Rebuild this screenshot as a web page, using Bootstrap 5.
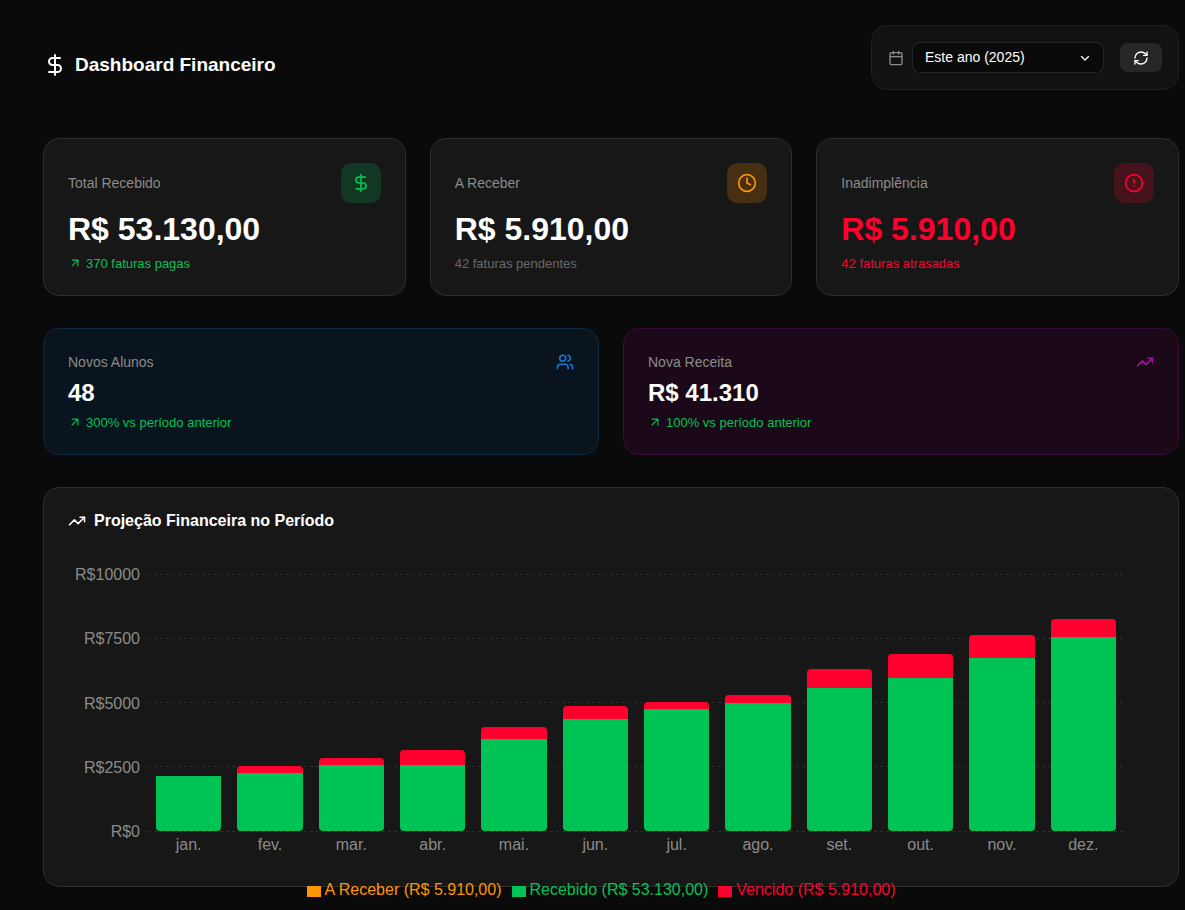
<!DOCTYPE html>
<html lang="pt-BR" data-bs-theme="dark">
<head>
<meta charset="utf-8">
<meta name="viewport" content="width=device-width, initial-scale=1">
<title>Dashboard Financeiro</title>
<link href="https://cdn.jsdelivr.net/npm/bootstrap@5.3.0/dist/css/bootstrap.min.css" rel="stylesheet">
<style>
  :root { --ok: #00c355; --warn: #ff9500; --late: #ff002e; --muted: #8b8b8b; }
  body { background: #0a0a0a; color: #fff; font-family: "Liberation Sans", Arial, sans-serif; }
  svg { flex: none; fill: none; stroke: currentColor; stroke-width: 2; stroke-linecap: round; stroke-linejoin: round; }
  .page { padding: 25px 6px 16px 43px; }
  .page-head { margin-bottom: 48px; }
  .page-title { font-size: 19px; line-height: 24px; font-weight: 700; padding-top: 14px; }
  .text-ok { color: var(--ok); }
  .text-warn { color: var(--warn); }
  .text-late { color: var(--late); }
  .text-dim { color: #696969; }

  .filter { background: #121212; border: 1px solid #1f1f1f; border-radius: 16px; padding: 16px; }
  .filter label { color: var(--muted); line-height: 16px; display: flex; }
  .filter .form-select {
    width: 192px; height: 31px; padding: 0 32px 0 12px; font-size: 14px; color: #fff;
    background-color: #0a0a0a; border-color: #262626; border-radius: 8px;
    background-position: right 12px center; background-size: 12px 12px;
    --bs-form-select-bg-img: url("data:image/svg+xml,%3csvg xmlns='http://www.w3.org/2000/svg' viewBox='0 0 24 24' fill='none' stroke='white' stroke-width='2.6' stroke-linecap='round' stroke-linejoin='round'%3e%3cpath d='m5 9 7 7 7-7'/%3e%3c/svg%3e");
    background-image: var(--bs-form-select-bg-img);
  }
  .refresh { width: 42px; height: 29px; padding: 0; background: #272727; border: 0; border-radius: 8px; color: #fff; }

  .panel { background: #171717; border: 1px solid #2e2e2e; border-radius: 16px; padding: 24px; }
  .panel-blue { background: #09141f; border-color: #0b2a45; }
  .panel-pink { background: #1b0819; border-color: #3a0d38; }
  .block-gap { margin-bottom: 32px; }
  .stat-name { font-size: 14px; line-height: 18px; color: var(--muted); }
  .stat-value { font-size: 32px; line-height: 37px; font-weight: 700; margin: 8px 0; }
  .stat-value-md { font-size: 24px; line-height: 28px; }
  .stat-note { font-size: 13px; line-height: 15px; }
  .stat-icon { width: 40px; height: 40px; border-radius: 10px; }
  .icon-ok { background: #123824; color: var(--ok); }
  .icon-warn { background: #462f13; color: var(--warn); }
  .icon-late { background: #46121c; color: var(--late); }

  .chart-title { font-size: 16px; line-height: 18px; font-weight: 700; margin-bottom: 32px; }
  .chart { height: 300px; padding-top: 12px; color: var(--muted); font-size: 16px; line-height: 24px; }
  .plot { height: 257px; }
  .ticks { inset: -13px 30px -13px 0; }
  .tick-label { width: 72px; padding-top: 2px; text-align: right; }
  .tick-line { height: 1px; background: repeating-linear-gradient(90deg, #2e2e2e 0 3px, transparent 3px 6px); }
  .bars, .months { margin-left: 80px; margin-right: 30px; }
  .bars > div, .months > div { flex: 1 1 0; min-width: 0; }
  .bars > div { padding: 0 8px; }
  .part-late { background: var(--late); border-radius: 4px 4px 0 0; }
  .part-ok { background: var(--ok); border-radius: 0 0 4px 4px; }
  .months { padding-top: 2px; }
  .legend-row { margin: 21px 30px 0 20px; }
  .legend-row li { margin-right: 10px; }
  .swatch { width: 14px; height: 11px; margin: 2px 4px 0 0; background: currentColor; }
</style>
</head>
<body>
<svg class="d-none" aria-hidden="true">
  <symbol id="i-dollar" viewBox="0 0 24 24"><path d="M12 2v20M17 5H9.5a3.5 3.5 0 0 0 0 7h5a3.5 3.5 0 0 1 0 7H6"/></symbol>
  <symbol id="i-up-right" viewBox="0 0 24 24"><path d="M7 7h10v10M7 17 17 7"/></symbol>
  <symbol id="i-trend" viewBox="0 0 24 24"><path d="M16 7h6v6"/><path d="m22 7-8.500 8.500-5-5L2 17"/></symbol>
</svg>
<main class="page">
  <header class="page-head d-flex justify-content-between align-items-center">
    <h1 class="page-title d-flex align-items-center gap-2 mb-0">
      <svg width="24" height="24"><use href="#i-dollar"/></svg>Dashboard Financeiro
    </h1>
    <form class="filter d-flex align-items-center gap-3">
      <div class="d-flex align-items-center gap-2">
        <label for="period" aria-label="Período">
          <svg width="16" height="16" viewBox="0 0 24 24"><path d="M8 2v4M16 2v4M3 10h18"/><rect x="3" y="4" width="18" height="18" rx="2"/></svg>
        </label>
        <select id="period" class="form-select"><option>Este ano (2025)</option></select>
      </div>
      <button type="button" class="btn refresh d-flex align-items-center justify-content-center" aria-label="Atualizar">
        <svg width="16" height="16" viewBox="0 0 24 24"><path d="M3 12a9 9 0 0 1 9-9 9.750 9.750 0 0 1 6.740 2.740L21 8"/><path d="M21 3v5h-5"/><path d="M21 12a9 9 0 0 1-9 9 9.750 9.750 0 0 1-6.740-2.740L3 16"/><path d="M8 16H3v5"/></svg>
      </button>
    </form>
  </header>

  <section class="row row-cols-3 gx-4 block-gap">
    <div class="col"><div class="panel">
      <div class="d-flex justify-content-between align-items-center">
        <span class="stat-name">Total Recebido</span>
        <span class="stat-icon icon-ok d-flex align-items-center justify-content-center"><svg width="20" height="20"><use href="#i-dollar"/></svg></span>
      </div>
      <div class="stat-value">R$ 53.130,00</div>
      <div class="stat-note text-ok d-flex gap-1"><svg width="14" height="14"><use href="#i-up-right"/></svg>370 faturas pagas</div>
    </div></div>
    <div class="col"><div class="panel">
      <div class="d-flex justify-content-between align-items-center">
        <span class="stat-name">A Receber</span>
        <span class="stat-icon icon-warn d-flex align-items-center justify-content-center"><svg width="20" height="20" viewBox="0 0 24 24"><circle cx="12" cy="12" r="10"/><path d="M12 6v6l4 2"/></svg></span>
      </div>
      <div class="stat-value">R$ 5.910,00</div>
      <div class="stat-note text-dim">42 faturas pendentes</div>
    </div></div>
    <div class="col"><div class="panel">
      <div class="d-flex justify-content-between align-items-center">
        <span class="stat-name">Inadimplência</span>
        <span class="stat-icon icon-late d-flex align-items-center justify-content-center"><svg width="20" height="20" viewBox="0 0 24 24"><circle cx="12" cy="12" r="10"/><path d="M12 8v4M12 16h.01"/></svg></span>
      </div>
      <div class="stat-value text-late">R$ 5.910,00</div>
      <div class="stat-note text-late">42 faturas atrasadas</div>
    </div></div>
  </section>

  <section class="row row-cols-2 gx-4 block-gap">
    <div class="col"><div class="panel panel-blue">
      <div class="d-flex justify-content-between align-items-center">
        <span class="stat-name">Novos Alunos</span>
        <svg width="18" height="18" viewBox="0 0 24 24" color="#147cd6"><path d="M16 21v-2a4 4 0 0 0-4-4H6a4 4 0 0 0-4 4v2"/><circle cx="9" cy="7" r="4"/><path d="M22 21v-2a4 4 0 0 0-3-3.870M16 3.130a4 4 0 0 1 0 7.750"/></svg>
      </div>
      <div class="stat-value stat-value-md">48</div>
      <div class="stat-note text-ok d-flex gap-1"><svg width="14" height="14"><use href="#i-up-right"/></svg>300% vs período anterior</div>
    </div></div>
    <div class="col"><div class="panel panel-pink">
      <div class="d-flex justify-content-between align-items-center">
        <span class="stat-name">Nova Receita</span>
        <svg width="18" height="18" color="#a3149b"><use href="#i-trend"/></svg>
      </div>
      <div class="stat-value stat-value-md">R$ 41.310</div>
      <div class="stat-note text-ok d-flex gap-1"><svg width="14" height="14"><use href="#i-up-right"/></svg>100% vs período anterior</div>
    </div></div>
  </section>

  <section class="panel">
    <h2 class="chart-title d-flex align-items-center gap-2"><svg width="18" height="18"><use href="#i-trend"/></svg>Projeção Financeira no Período</h2>
    <div class="chart">
      <div class="plot position-relative">
        <div class="ticks position-absolute d-flex flex-column justify-content-between">
          <div class="d-flex align-items-center gap-2"><span class="tick-label">R$10000</span><span class="tick-line flex-grow-1"></span></div>
          <div class="d-flex align-items-center gap-2"><span class="tick-label">R$7500</span><span class="tick-line flex-grow-1"></span></div>
          <div class="d-flex align-items-center gap-2"><span class="tick-label">R$5000</span><span class="tick-line flex-grow-1"></span></div>
          <div class="d-flex align-items-center gap-2"><span class="tick-label">R$2500</span><span class="tick-line flex-grow-1"></span></div>
          <div class="d-flex align-items-center gap-2"><span class="tick-label">R$0</span><span class="tick-line flex-grow-1"></span></div>
        </div>
        <!-- Each height is the month's amount as a share of R$ 10.000 -->
        <div class="bars position-relative d-flex h-100">
          <div class="d-flex flex-column justify-content-end"><div class="part-ok" style="height:21.6%"></div></div>
          <div class="d-flex flex-column justify-content-end"><div class="part-late" style="height:3%"></div><div class="part-ok" style="height:22.4%"></div></div>
          <div class="d-flex flex-column justify-content-end"><div class="part-late" style="height:2.8%"></div><div class="part-ok" style="height:25.7%"></div></div>
          <div class="d-flex flex-column justify-content-end"><div class="part-late" style="height:5.8%"></div><div class="part-ok" style="height:25.7%"></div></div>
          <div class="d-flex flex-column justify-content-end"><div class="part-late" style="height:4.6%"></div><div class="part-ok" style="height:35.9%"></div></div>
          <div class="d-flex flex-column justify-content-end"><div class="part-late" style="height:5.2%"></div><div class="part-ok" style="height:43.4%"></div></div>
          <div class="d-flex flex-column justify-content-end"><div class="part-late" style="height:3.1%"></div><div class="part-ok" style="height:47.3%"></div></div>
          <div class="d-flex flex-column justify-content-end"><div class="part-late" style="height:3.1%"></div><div class="part-ok" style="height:50%"></div></div>
          <div class="d-flex flex-column justify-content-end"><div class="part-late" style="height:7.3%"></div><div class="part-ok" style="height:55.7%"></div></div>
          <div class="d-flex flex-column justify-content-end"><div class="part-late" style="height:9.4%"></div><div class="part-ok" style="height:59.6%"></div></div>
          <div class="d-flex flex-column justify-content-end"><div class="part-late" style="height:8.8%"></div><div class="part-ok" style="height:67.4%"></div></div>
          <div class="d-flex flex-column justify-content-end"><div class="part-late" style="height:7%"></div><div class="part-ok" style="height:75.5%"></div></div>
        </div>
      </div>
      <div class="months d-flex text-center">
        <div>jan.</div><div>fev.</div><div>mar.</div><div>abr.</div><div>mai.</div><div>jun.</div><div>jul.</div><div>ago.</div><div>set.</div><div>out.</div><div>nov.</div><div>dez.</div>
      </div>
      <ul class="legend-row list-unstyled d-flex justify-content-center">
        <li class="d-flex align-items-center text-warn"><span class="swatch"></span>A Receber (R$ 5.910,00)</li>
        <li class="d-flex align-items-center text-ok"><span class="swatch"></span>Recebido (R$ 53.130,00)</li>
        <li class="d-flex align-items-center text-late"><span class="swatch"></span>Vencido (R$ 5.910,00)</li>
      </ul>
    </div>
  </section>
</main>
<script src="https://cdn.jsdelivr.net/npm/bootstrap@5.3.0/dist/js/bootstrap.bundle.min.js"></script>
</body>
</html>
